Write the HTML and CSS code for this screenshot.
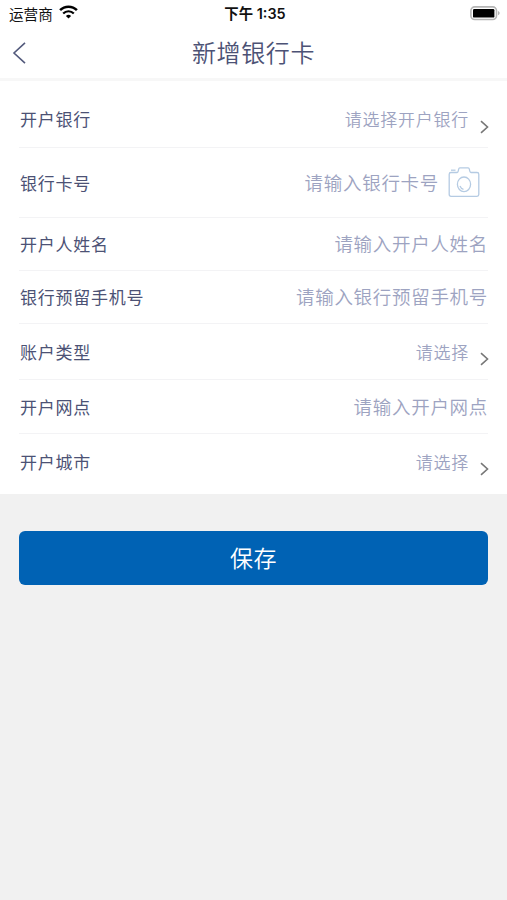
FILE: index.html
```
<!DOCTYPE html>
<html lang="zh-CN">
<head>
    <meta charset="UTF-8">
    <meta name="viewport" content="width=device-width, initial-scale=1.0">
    <title>新增银行卡</title>
    <link rel="stylesheet" href="styles.css">
</head>
<body>
    <div class="status-bar">
        <div class="carrier">
            <span>运营商</span>
            <svg class="wifi" width="19" height="14" viewBox="0 0 19 14">
                <path d="M1.1 5.2a11.7 11.7 0 0 1 16.8 0" fill="none" stroke="#000" stroke-width="2.5"/>
                <path d="M4.2 8.5a7.4 7.4 0 0 1 10.6 0" fill="none" stroke="#000" stroke-width="2.2"/>
                <path d="M9.5 13.6l-2.6-2.7a3.8 3.8 0 0 1 5.2 0z" fill="#000"/>
            </svg>
        </div>
        <div class="time">下午 1:35</div>
        <svg class="battery" width="32" height="16" viewBox="0 0 32 16">
            <rect x="1.9" y="1.9" width="25.6" height="12.6" rx="3.8" fill="#fff" stroke="#b5b5b5" stroke-width="1.6"/>
            <rect x="4" y="4" width="21.4" height="8.6" rx="1.2" fill="#000"/>
            <path d="M29 6.1c2.2.8 2.2 3.4 0 4.2z" fill="#b5b5b5"/>
        </svg>
    </div>

    <div class="nav-bar">
        <svg class="back" width="16" height="24" viewBox="0 0 16 24">
            <path d="M14 1.8L3 12l11 10.2" fill="none" stroke="#535a7c" stroke-width="1.6"/>
        </svg>
        <h1>新增银行卡</h1>
    </div>

    <form class="form">
        <div class="row row-bank">
            <label>开户银行</label>
            <span class="select">请选择开户银行</span>
            <svg class="arrow" width="10" height="14" viewBox="0 0 10 14"><path d="M2 1.2L8.5 7 2 12.8"/></svg>
        </div>
        <div class="row row-card">
            <label for="card">银行卡号</label>
            <input id="card" type="text" placeholder="请输入银行卡号">
            <svg class="camera" width="32" height="32" viewBox="0 0 32 32">
                <path d="M3 6.5h6.2c.8 0 .9-.6 1.1-1.6l.4-2c.1-.8.5-1.1 1.2-1.1h8.2c.7 0 1.1.3 1.2 1.1l.4 2c.2 1 .5 1.6 1.3 1.6H29c1.2 0 1.8.7 1.8 1.8v20.2c0 1.2-.6 1.8-1.8 1.8H3c-1.2 0-1.8-.6-1.8-1.8V8.3c0-1.1.6-1.8 1.8-1.8z"/>
                <path d="M3 4.2h4.5"/>
                <ellipse cx="16" cy="18.3" rx="6.6" ry="7.3"/>
                <path d="M12 20c.6 1.7 1.8 2.9 3.5 3.3"/>
            </svg>
        </div>
        <div class="row row-name">
            <label for="name">开户人姓名</label>
            <input id="name" type="text" placeholder="请输入开户人姓名">
        </div>
        <div class="row row-phone">
            <label for="phone">银行预留手机号</label>
            <input id="phone" type="text" placeholder="请输入银行预留手机号">
        </div>
        <div class="row row-type">
            <label>账户类型</label>
            <span class="select">请选择</span>
            <svg class="arrow" width="10" height="14" viewBox="0 0 10 14"><path d="M2 1.2L8.5 7 2 12.8"/></svg>
        </div>
        <div class="row row-branch">
            <label for="branch">开户网点</label>
            <input id="branch" type="text" placeholder="请输入开户网点">
        </div>
        <div class="row row-city">
            <label>开户城市</label>
            <span class="select">请选择</span>
            <svg class="arrow" width="10" height="14" viewBox="0 0 10 14"><path d="M2 1.2L8.5 7 2 12.8"/></svg>
        </div>
    </form>

    <button class="save" type="button">保存</button>
</body>
</html>
```
FILE: styles.css
```
* {
    box-sizing: border-box;
}

body {
    margin: 0;
    min-height: 100vh;
    background-color: #f1f1f1;
    font-family: "Noto Sans CJK SC", sans-serif;
    color: #4c5275;
}

svg {
    display: block;
    flex: none;
}

/* Status bar */
.status-bar {
    display: grid;
    grid-template-columns: 1fr auto 1fr;
    align-items: center;
    height: 27px;
    padding: 0 6px 0 9px;
    background-color: #fff;
    color: #111;
    font-size: 14.6px;
    line-height: 27px;
}

.carrier {
    display: flex;
    align-items: center;
    gap: 6px;
}

.carrier span {
    margin-top: -1px;
}

.wifi {
    margin-top: -3px;
}

.time {
    font-family: Inter, "Noto Sans CJK SC", sans-serif;
    font-size: 14.4px;
    font-weight: 600;
}

.battery {
    justify-self: end;
    margin-top: -1px;
}

/* Navigation bar */
.nav-bar {
    display: grid;
    grid-template-columns: 16px 1fr 16px;
    align-items: center;
    height: 54px;
    padding: 0 11px;
    border-bottom: 3px solid #f7f7f7;
    background-color: #fff;
}

h1 {
    margin: -2px 0 0;
    font-size: 24px;
    font-weight: 350;
    letter-spacing: 0.6px;
    line-height: 50px;
    text-align: center;
}

/* Form rows */
.form {
    padding: 0 19px;
    background-color: #fff;
}

.row {
    display: flex;
    align-items: center;
    border-bottom: 1px solid #f3f3f5;
}

.row-bank {
    height: 67px;
    padding-top: 10px;
}

.row-card {
    height: 70px;
}

.row-name,
.row-phone {
    height: 53px;
}

.row-type {
    height: 56px;
}

.row-branch {
    height: 54px;
}

.row-city {
    height: 60px;
    padding-bottom: 5px;
    border-bottom: none;
}

label {
    flex: none;
    padding-left: 1px;
    font-size: 17px;
    letter-spacing: 0.75px;
    line-height: 26px;
}

input {
    flex: 1;
    min-width: 0;
    margin-top: -2px;
    padding: 0;
    border: none;
    outline: none;
    background: none;
    color: #4c5275;
    font-family: inherit;
    font-size: 18.5px;
    font-weight: 350;
    letter-spacing: 0.7px;
    line-height: 28px;
    text-align: right;
}

input::placeholder {
    color: #9da3c1;
    opacity: 1;
}

.select {
    flex: 1;
    color: #9da3c1;
    font-size: 17px;
    font-weight: 350;
    letter-spacing: 0.75px;
    line-height: 26px;
    text-align: right;
}

.arrow {
    margin: 15px -1px 0 10px;
    fill: none;
    stroke: #777;
    stroke-width: 1.6;
}

.camera {
    margin: -2px 8px 0 9px;
    fill: none;
    stroke: #b5cbe3;
    stroke-width: 1.3;
}

/* Save button */
.save {
    display: block;
    width: calc(100% - 38px);
    height: 54px;
    margin: 36.5px 19px 0;
    padding: 0 0 2px;
    border: none;
    border-radius: 6px;
    background-color: #0062b4;
    color: #fff;
    font-family: inherit;
    font-size: 23px;
    font-weight: 350;
    letter-spacing: 0.5px;
    cursor: pointer;
}
```
